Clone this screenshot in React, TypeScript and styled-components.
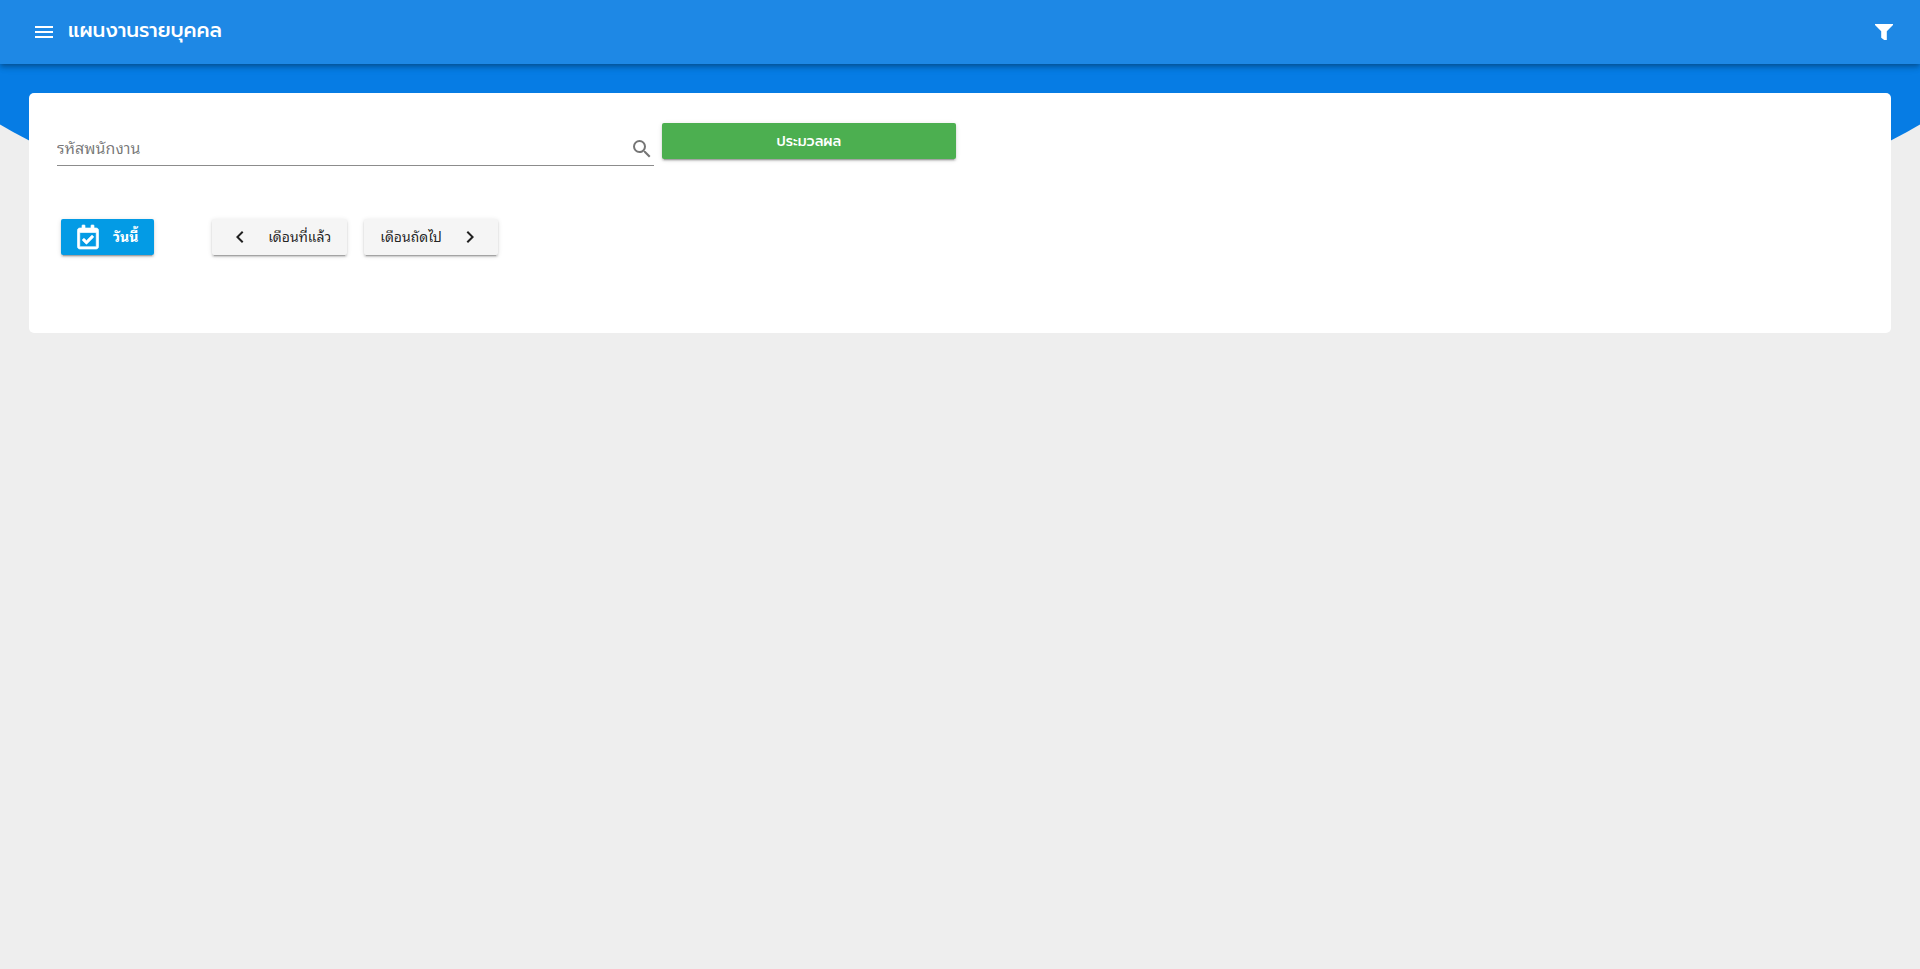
import React from 'react';
import styled, { createGlobalStyle } from 'styled-components';
import { FaRegCalendarCheck } from 'react-icons/fa';
import { MdChevronLeft, MdChevronRight, MdMenu, MdSearch } from 'react-icons/md';

const GlobalStyle = createGlobalStyle`
  *, *::before, *::after { box-sizing: border-box; }
  body {
    margin: 0;
    background: #eeeeee;
    color: rgba(0, 0, 0, 0.87);
    font-family: 'Noto Sans Thai Looped', 'Noto Sans', sans-serif;
    font-size: 14px;
  }
  button, input { font: inherit; color: inherit; }
`;

const Page = styled.div`
  position: relative;
  min-height: 100vh;
  overflow: hidden;
`;

const Backdrop = styled.div`
  position: absolute;
  top: 0;
  left: -5%;
  width: 110%;
  height: 293px;
  background: #067ce4;
  border-radius: 0 0 50% 50% / 0 0 289px 289px;
`;

const AppBar = styled.header`
  position: relative;
  display: flex;
  align-items: center;
  height: 64px;
  padding: 0 16px 0 24px;
  background: #1e88e5;
  color: #ffffff;
  box-shadow:
    0 2px 4px -1px rgba(0, 0, 0, 0.2),
    0 4px 5px 0 rgba(0, 0, 0, 0.14),
    0 1px 10px 0 rgba(0, 0, 0, 0.12);
`;

const IconButton = styled.button`
  display: flex;
  align-items: center;
  justify-content: center;
  width: 40px;
  height: 40px;
  padding: 0;
  border: 0;
  border-radius: 50%;
  background: transparent;
  cursor: pointer;
`;

const Title = styled.h1`
  flex: 1;
  margin: 0 0 0 4px;
  padding-bottom: 4px;
  font-family: Prompt, 'Noto Sans', sans-serif;
  font-size: 20px;
  font-weight: 500;
  line-height: 30px;
`;

const Card = styled.main`
  position: relative;
  margin: 29px;
  padding: 24px 24px 78px;
  border-radius: 5px;
  background: #ffffff;
`;

const Row = styled.div<{ $top: number }>`
  display: grid;
  grid-template-columns: repeat(12, 1fr);
  align-items: start;
  padding-top: ${({ $top }) => $top}px;
`;

const Column = styled.div<{ $span: number; $inset: number }>`
  grid-column: span ${({ $span }) => $span};
  display: flex;
  gap: 17px;
  padding: 0 ${({ $inset }) => $inset}px;
`;

const SearchField = styled.div`
  flex: 1;
  display: flex;
  align-items: center;
  height: 34px;
  margin-top: 9px;
  border-bottom: 1px solid #8c8c8c;
  color: rgba(0, 0, 0, 0.54);
`;

const CodeInput = styled.input`
  flex: 1;
  min-width: 0;
  height: 32px;
  padding: 0 0 4px;
  border: 0;
  outline: 0;
  background: transparent;
  font-size: 16px;
  &::placeholder { color: rgba(0, 0, 0, 0.54); opacity: 1; }
`;

const SearchButton = styled(IconButton)`
  width: 24px;
  height: 24px;
`;

const Button = styled.button`
  display: flex;
  align-items: center;
  justify-content: center;
  gap: 16px;
  height: 36px;
  padding: 0 16px;
  border: 0;
  border-radius: 2px;
  background: #f5f5f5;
  line-height: 20px;
  white-space: nowrap;
  cursor: pointer;
  box-shadow:
    0 3px 1px -2px rgba(0, 0, 0, 0.2),
    0 2px 2px 0 rgba(0, 0, 0, 0.14),
    0 1px 5px 0 rgba(0, 0, 0, 0.12);
`;

const Label = styled.span`
  padding-bottom: 2px;
`;

const ProcessButton = styled(Button)`
  flex: 1;
  padding-top: 2px;
  background: #4caf50;
  color: #ffffff;
  font-family: Prompt, 'Noto Sans', sans-serif;
  font-weight: 500;
`;

const TodayButton = styled(Button)`
  gap: 14px;
  background: #039be5;
  color: #ffffff;
  font-weight: 700;
`;

const CalendarIcon = styled(FaRegCalendarCheck)`
  width: 22px;
  height: 24px;
  overflow: visible;
  stroke-width: 14px;
`;

const FilterIcon = () => (
  <svg width="24" height="24" viewBox="0 0 24 24" fill="currentColor" aria-hidden="true">
    <path d="M3 4H21V5L14.8 11.2V20H12.2L9.2 17.8V11.2L3 5Z" />
  </svg>
);

export default function App() {
  return (
    <Page>
      <GlobalStyle />
      <Backdrop />
      <AppBar>
        <IconButton type="button" aria-label="เมนู">
          <MdMenu size={24} />
        </IconButton>
        <Title>แผนงานรายบุคคล</Title>
        <IconButton type="button" aria-label="ตัวกรอง">
          <FilterIcon />
        </IconButton>
      </AppBar>
      <Card>
        <Row $top={6}>
          <Column $span={4} $inset={4}>
            <SearchField>
              <CodeInput type="text" placeholder="รหัสพนักงาน" aria-label="รหัสพนักงาน" />
              <SearchButton type="button" aria-label="ค้นหา">
                <MdSearch size={24} />
              </SearchButton>
            </SearchField>
          </Column>
          <Column $span={2} $inset={4}>
            <ProcessButton type="button">ประมวลผล</ProcessButton>
          </Column>
        </Row>
        <Row $top={53}>
          <Column $span={1} $inset={8}>
            <TodayButton type="button">
              <CalendarIcon />
              <Label>วันนี้</Label>
            </TodayButton>
          </Column>
          <Column $span={4} $inset={8}>
            <Button type="button">
              <MdChevronLeft size={24} />
              <Label>เดือนที่แล้ว</Label>
            </Button>
            <Button type="button">
              <Label>เดือนถัดไป</Label>
              <MdChevronRight size={24} />
            </Button>
          </Column>
        </Row>
      </Card>
    </Page>
  );
}
